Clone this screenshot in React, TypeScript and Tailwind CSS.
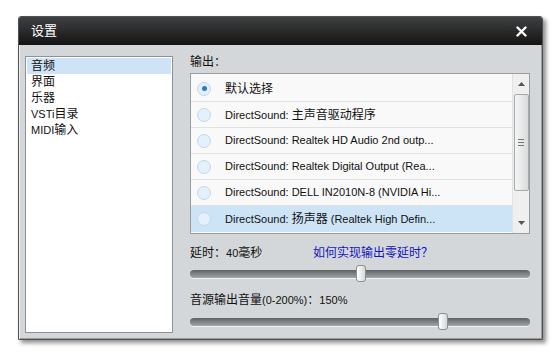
import React from "react";

const FONT = { fontFamily: '"Liberation Sans", "Noto Sans CJK SC", sans-serif' };

// split latin / CJK so the CJK runs get 12px while latin stays 11px (Tahoma-ish width)
function T({ s }: { s: string }) {
  const parts = s.split(/([\u3000-\u9fff\uff00-\uffef]+)/);
  return (
    <>
      {parts.map((p, i) =>
        /[\u3000-\u9fff\uff00-\uffef]/.test(p) ? (
          <span key={i} className="text-[12px]">
            {p}
          </span>
        ) : (
          <span key={i}>{p}</span>
        )
      )}
    </>
  );
}

const navItems = ["音频", "界面", "乐器", "VSTi目录", "MIDI输入"];

const outputs = [
  "默认选择",
  "DirectSound: 主声音驱动程序",
  "DirectSound: Realtek HD Audio 2nd outp...",
  "DirectSound: Realtek Digital Output (Rea...",
  "DirectSound: DELL IN2010N-8 (NVIDIA Hi...",
  "DirectSound: 扬声器 (Realtek High Defin...",
];

function Radio({ checked }: { checked: boolean }) {
  return (
    <div className="w-[14px] h-[14px] rounded-full border border-[#c3d7ea] bg-[#e4f0fb] flex items-center justify-center shrink-0">
      {checked && <div className="w-[5px] h-[5px] rounded-full bg-[#2f78d0]" />}
    </div>
  );
}

function Slider({ left }: { left: number }) {
  return (
    <div className="relative h-[17px] flex items-center">
      <div className="w-full h-[8px] rounded-full bg-gradient-to-b from-[#5f6265] to-[#a3a6a8] shadow-[0_1px_0_#f4f4f4]" />
      <div
        className="absolute top-0 w-[10px] h-[17px] rounded-[3px] border border-[#8c8f91] bg-gradient-to-r from-[#ffffff] to-[#d6d8da]"
        style={{ left }}
      />
    </div>
  );
}

function ScrollBar() {
  return (
    <div className="w-[17px] h-full bg-[#efefef] border-l border-[#e2e2e2] flex flex-col items-center">
      <div className="h-[20px] flex items-center justify-center">
        <svg width="7" height="4" viewBox="0 0 7 4">
          <path d="M0 4 L3.5 0 L7 4 Z" fill="#555" />
        </svg>
      </div>
      <div className="w-[15px] h-[97px] rounded-[2px] border border-[#a6a8aa] bg-gradient-to-r from-[#f6f6f6] to-[#d9dbdc] flex flex-col items-center justify-center gap-[2px]">
        <div className="w-[6px] h-[1px] bg-[#777]" />
        <div className="w-[6px] h-[1px] bg-[#777]" />
        <div className="w-[6px] h-[1px] bg-[#777]" />
      </div>
      <div className="flex-1" />
      <div className="h-[20px] flex items-center justify-center">
        <svg width="7" height="4" viewBox="0 0 7 4">
          <path d="M0 0 L3.5 4 L7 0 Z" fill="#555" />
        </svg>
      </div>
    </div>
  );
}

export default function App() {
  return (
    <div className="w-[557px] h-[356px] bg-white overflow-hidden text-[11px] text-[#111]" style={FONT}>
      <div className="ml-[18px] mt-[16px] w-[525px] h-[324px] border border-[#4f5153] rounded-t-[3px] shadow-[3px_3px_4px_rgba(0,0,0,0.45)] flex flex-col">
        {/* title bar */}
        <div className="h-[28px] bg-gradient-to-b from-[#404142] to-[#151515] flex items-center justify-between pl-[12px] pr-[15px] rounded-t-[2px]">
          <span className="text-white text-[13px]">设置</span>
          <svg width="11" height="11" viewBox="0 0 11 11">
            <path d="M1.5 1.5 L9.5 9.5 M9.5 1.5 L1.5 9.5" stroke="#fff" strokeWidth="2.4" strokeLinecap="round" />
          </svg>
        </div>

        {/* body */}
        <div className="flex-1 bg-[#d4d7d9] shadow-[inset_1px_0_0_#eef0f1,inset_-1px_-1px_0_#9a9c9e] flex pl-[6px] pt-[11px]">
          <div className="w-[148px] h-[277px] bg-white border border-[#8f9294] p-[1px]">
            {navItems.map((n, i) => (
              <div
                key={n}
                className={`h-[16px] leading-[16px] pl-[4px] ${i === 0 ? "bg-[#cfe3f6]" : ""}`}
              >
                <T s={n} />
              </div>
            ))}
          </div>

          <div className="ml-[17px] w-[340px] flex flex-col">
            <div className="h-[17px] leading-[13px]">
              <T s="输出：" />
            </div>
            <div className="h-[161px] bg-[#f9f9f9] border border-[#9a9da0] flex">
              <div className="flex-1 pt-[2px]">
                {outputs.map((o, i) => (
                  <div
                    key={o}
                    className={`h-[26px] flex items-center pl-[6px] ${
                      i === outputs.length - 1 ? "bg-[#cde4f7]" : "border-b border-[#e1e1e1]"
                    }`}
                  >
                    <Radio checked={i === 0} />
                    <span className="ml-[14px] whitespace-nowrap">
                      <T s={o} />
                    </span>
                  </div>
                ))}
              </div>
              <ScrollBar />
            </div>

            <div className="mt-[11px] h-[16px] leading-[16px] flex">
              <span className="w-[123px]">
                <T s="延时：40毫秒" />
              </span>
              <span className="text-[#1414c4]">
                <T s="如何实现输出零延时？" />
              </span>
            </div>
            <div className="mt-[4px]">
              <Slider left={166} />
            </div>

            <div className="mt-[10px] h-[16px] leading-[16px]">
              <T s="音源输出音量(0-200%)：150%" />
            </div>
            <div className="mt-[5px]">
              <Slider left={248} />
            </div>
          </div>
        </div>
      </div>
    </div>
  );
}
